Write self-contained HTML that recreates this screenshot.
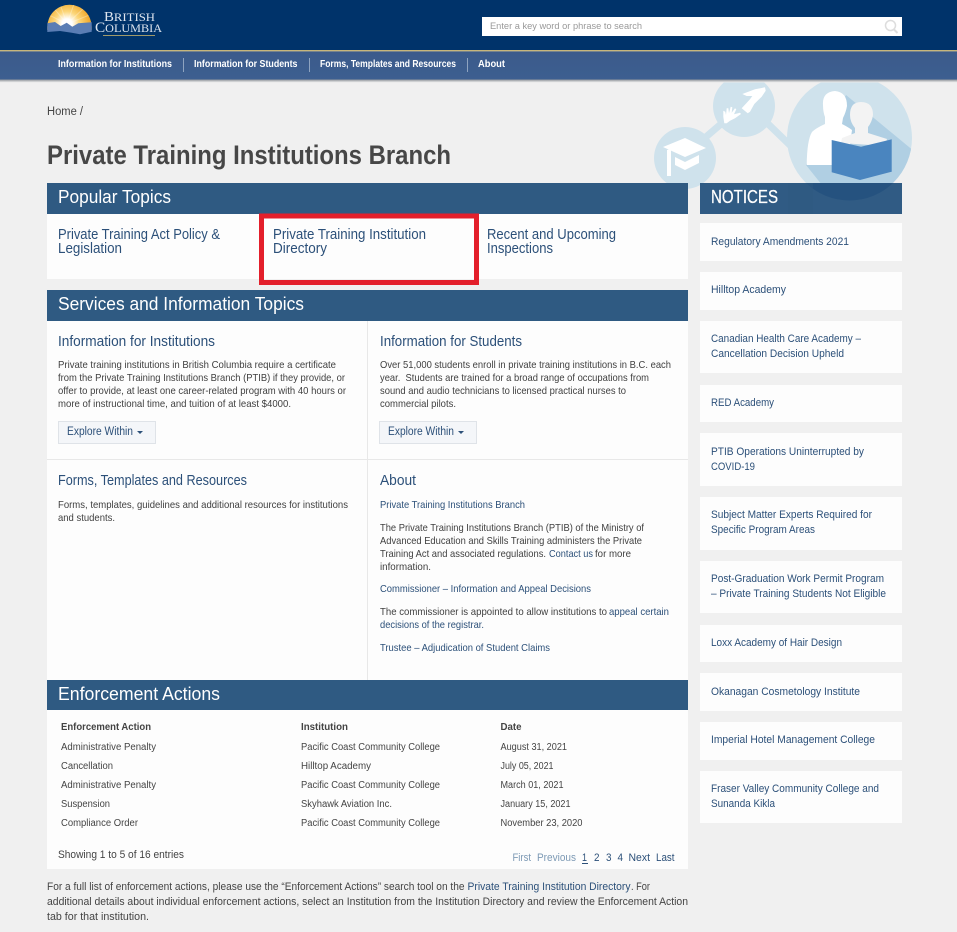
<!DOCTYPE html>
<html lang="en"><head><meta charset="utf-8"><title>Private Training Institutions Branch</title>
<style>
html,body{margin:0;padding:0;background:#f0f0f0;width:957px;height:932px;overflow:hidden}
svg{display:block}
text{font-family:"Liberation Sans",sans-serif;white-space:pre}
.l{fill:#2c5079}.b{fill:#3f3f3f}
.h{fill:#fff;font-size:18px}
.t{font-size:15px;fill:#2c5079}
.s{font-size:14.5px;fill:#2c5079}
.p{font-size:10.5px}
.n{font-size:11px;fill:#2c5079}
.m{font-size:10.5px;fill:#fff;font-weight:bold}
.r{font-size:10px;fill:#444}
</style></head><body>
<svg width="957" height="932" viewBox="0 0 957 932" xmlns="http://www.w3.org/2000/svg">
<defs>
<linearGradient id="nav" x1="0" y1="0" x2="0" y2="1"><stop offset="0" stop-color="#3b5a8b"/><stop offset="1" stop-color="#3d5f90"/></linearGradient>
<linearGradient id="sh" x1="0" y1="0" x2="0" y2="1"><stop offset="0" stop-color="#8a8f96"/><stop offset="1" stop-color="#f0f0f0"/></linearGradient>
<radialGradient id="sun" gradientUnits="userSpaceOnUse" cx="67" cy="24" r="23"><stop offset=".22" stop-color="#fff"/><stop offset=".55" stop-color="#fcd678"/><stop offset="1" stop-color="#f0a92e"/></radialGradient>
<clipPath id="big"><circle cx="849.5" cy="138" r="62.5"/></clipPath>
<clipPath id="gfx"><rect x="640" y="82" width="290" height="130"/></clipPath>
<clipPath id="dome"><path d="M47.3 30V27a22.2 22.2 0 0 1 44.4 0V30Z"/></clipPath>
<clipPath id="nb"><rect x="700" y="183" width="202" height="31"/></clipPath>
</defs>

<rect width="957" height="932" fill="#f0f0f0"/>

<!-- decorative graphic -->
<g clip-path="url(#gfx)">
<path d="M700 142L728 118M762 118L795 150" stroke="#cfe2ec" stroke-width="7" fill="none"/>
<circle cx="685" cy="158" r="31" fill="#cfe2ec"/>
<circle cx="744" cy="106" r="31" fill="#cfe2ec"/>
<circle cx="849.5" cy="138" r="62.5" fill="#cfe2ec"/>
<path clip-path="url(#big)" d="M846 95L915 152V210H842L806 165Z" fill="#b0cfe3"/>
<!-- cap -->
<path d="M663 147L685 138L706 148L685 157Z" fill="#fff"/>
<path d="M667 150L671 149V176H667Z" fill="#fff"/>
<path d="M675 157L685 162L699 155V163L685 170L675 165Z" fill="#fff"/>
<!-- hands -->
<path d="M742.300 94L755 89.300L765 87.300L765.700 90.700L761.700 96.700L758.300 100L754.300 104L750 111.700L747.700 113.300L741.700 108.300L750 99.300L752.300 96L746.700 96Z" fill="#fff"/>
<path d="M724.300 123.300L723.300 116.700L723.300 110.700L725.300 111.700L726 115L726.700 108.300L728.300 108.300L729 113.300L730.700 106.700L732.300 107.300L731.700 112.700L735 108.300L736.300 109.300L734 114.300L740 112.700L741 114L735 118.300L730 120.700L726.700 123.300Z" fill="#fff"/>
<!-- people -->
<path d="M823 105Q822 92 835 91Q847 92 847 106Q846 112 843 118L842 124Q848 127 852 130L850 145L832 165L806.700 165Q807 140 812 132Q816 128 825 124L825 117Q823 112 823 105Z" fill="#fff"/>
<path d="M850 115Q850 102 861 102Q873 102 873 115Q872 122 868 127L868 133L887 139L885 146L841 143L842 138L855 133L855 128Q850 122 850 115Z" fill="#f3f3f3"/>
<path d="M831.700 140L861 146.700L891.700 139.300V171.700L860 180L831.700 172.300Z" fill="#4a85bf"/>
</g>

<!-- header -->
<rect width="957" height="50" fill="#00336a"/>
<rect y="50" width="957" height="1.4" fill="#c7b67b"/>
<rect y="51.4" width="957" height="28.6" fill="url(#nav)"/>
<rect y="79.5" width="957" height="3" fill="url(#sh)"/>

<!-- logo -->
<g clip-path="url(#dome)">
<rect x="47" y="4" width="46" height="28" fill="url(#sun)"/>
<path d="M67 24L52 6M67 24L60 4M67 24L74 4M67 24L85 7M67 24L47 14M67 24L92 14" stroke="#fff" stroke-opacity=".3" stroke-width="1"/>
</g>
<path d="M47.300 23.300L55 22L60.700 26L66.700 22.700L72.300 26.700L78.300 23.300L91.700 22.300V31.700L80 34.300L71.700 32.700L60 31L47.300 32Z" fill="#5a7db4"/>
<text x="104" y="21" textLength="51" lengthAdjust="spacingAndGlyphs" style="font-family:'Liberation Serif',serif;font-size:12px" fill="#dfe6ef"><tspan font-size="14">B</tspan>RITISH</text>
<text x="95" y="32" textLength="67" lengthAdjust="spacingAndGlyphs" style="font-family:'Liberation Serif',serif;font-size:12px" fill="#dfe6ef"><tspan font-size="15">C</tspan>OLUMBIA</text>
<rect x="103" y="35" width="52" height="1" fill="#a09a6a"/>

<!-- search -->
<rect x="482" y="17" width="420" height="19" fill="#fff"/>
<text x="490" y="29" font-size="9.5" fill="#999" textLength="152" lengthAdjust="spacingAndGlyphs">Enter a key word or phrase to search</text>
<circle cx="890.5" cy="25.5" r="5" fill="none" stroke="#ddd" stroke-width="1.5"/>
<path d="M894 29.5L897.5 33" stroke="#ddd" stroke-width="2"/>

<!-- nav -->
<text class="m" x="58" y="67" textLength="114" lengthAdjust="spacingAndGlyphs">Information for Institutions</text>
<text class="m" x="194" y="67" textLength="103.500" lengthAdjust="spacingAndGlyphs">Information for Students</text>
<text class="m" x="320" y="67" textLength="136" lengthAdjust="spacingAndGlyphs">Forms, Templates and Resources</text>
<text class="m" x="478" y="67" textLength="27" lengthAdjust="spacingAndGlyphs">About</text>
<path d="M183.500 58V72M309.500 58V72M467.500 58V72" stroke="#8ea3c0" stroke-width="1"/>

<!-- breadcrumb and title -->
<text x="47" y="115" font-size="11.500" fill="#444" textLength="36" lengthAdjust="spacingAndGlyphs">Home /</text>
<text x="47" y="164" font-size="27" font-weight="bold" fill="#474747" textLength="404" lengthAdjust="spacingAndGlyphs">Private Training Institutions Branch</text>

<!-- panels -->
<rect x="47" y="214" width="641" height="65" fill="#fdfdfd"/>
<rect x="47" y="321" width="641" height="359" fill="#fdfdfd"/>
<rect x="47" y="710" width="641" height="159" fill="#fdfdfd"/>
<rect x="47" y="183" width="641" height="31" fill="#2f5a82"/>
<rect x="47" y="290" width="641" height="31" fill="#2f5a82"/>
<rect x="47" y="680" width="641" height="30" fill="#2f5a82"/>
<rect x="700" y="183" width="202" height="31" fill="#305b84"/>
<circle clip-path="url(#nb)" cx="849.500" cy="138" r="62.500" fill="#25527f"/>
<rect x="788" y="183" width="25" height="31" fill="#2f5a82" opacity=".55"/>
<path d="M367.500 321V680" stroke="#e8e8e8"/>
<path d="M47 459.500H688" stroke="#e8e8e8"/>

<!-- section headers -->
<text class="h" x="58" y="203" textLength="113" lengthAdjust="spacingAndGlyphs">Popular Topics</text>
<text class="h" x="711" y="203" textLength="67" lengthAdjust="spacingAndGlyphs" stroke="#fff" stroke-width=".25">NOTICES</text>
<text class="h" x="58" y="310" textLength="246" lengthAdjust="spacingAndGlyphs">Services and Information Topics</text>
<text class="h" x="58" y="700" textLength="162" lengthAdjust="spacingAndGlyphs">Enforcement Actions</text>

<!-- popular -->
<text class="t" x="58" y="239" textLength="162" lengthAdjust="spacingAndGlyphs">Private Training Act Policy &amp;</text>
<text class="t" x="58" y="253" textLength="64" lengthAdjust="spacingAndGlyphs">Legislation</text>
<text class="t" x="273" y="239" textLength="153" lengthAdjust="spacingAndGlyphs">Private Training Institution</text>
<text class="t" x="273" y="253" textLength="54" lengthAdjust="spacingAndGlyphs">Directory</text>
<text class="t" x="487" y="239" textLength="129" lengthAdjust="spacingAndGlyphs">Recent and Upcoming</text>
<text class="t" x="487" y="253" textLength="66" lengthAdjust="spacingAndGlyphs">Inspections</text>
<rect x="261.500" y="216" width="215" height="66.500" fill="none" stroke="#e31f2b" stroke-width="5"/>

<!-- services -->
<text class="s" x="58" y="346" textLength="157" lengthAdjust="spacingAndGlyphs">Information for Institutions</text>
<text class="p b" x="58" y="368" textLength="278" lengthAdjust="spacingAndGlyphs">Private training institutions in British Columbia require a certificate</text>
<text class="p b" x="58" y="381" textLength="287" lengthAdjust="spacingAndGlyphs">from the Private Training Institutions Branch (PTIB) if they provide, or</text>
<text class="p b" x="58" y="394" textLength="288" lengthAdjust="spacingAndGlyphs">offer to provide, at least one career-related program with 40 hours or</text>
<text class="p b" x="58" y="407" textLength="233" lengthAdjust="spacingAndGlyphs">more of instructional time, and tuition of at least $4000.</text>
<rect x="58.500" y="421.500" width="97" height="22" fill="#f4f6f9" stroke="#dfe3e8"/>
<text x="67" y="435" font-size="11.500" fill="#2c5079" textLength="66" lengthAdjust="spacingAndGlyphs">Explore Within</text>
<path d="M137 431H143L140 434Z" fill="#2c5079"/>

<text class="s" x="380" y="346" textLength="142" lengthAdjust="spacingAndGlyphs">Information for Students</text>
<text class="p b" x="380" y="368" textLength="291" lengthAdjust="spacingAndGlyphs">Over 51,000 students enroll in private training institutions in B.C. each</text>
<text class="p b" x="380" y="381" textLength="269" lengthAdjust="spacingAndGlyphs">year.  Students are trained for a broad range of occupations from</text>
<text class="p b" x="380" y="394" textLength="246" lengthAdjust="spacingAndGlyphs">sound and audio technicians to licensed practical nurses to</text>
<text class="p b" x="380" y="407" textLength="76" lengthAdjust="spacingAndGlyphs">commercial pilots.</text>
<rect x="379.500" y="421.500" width="97" height="22" fill="#f4f6f9" stroke="#dfe3e8"/>
<text x="388" y="435" font-size="11.500" fill="#2c5079" textLength="66" lengthAdjust="spacingAndGlyphs">Explore Within</text>
<path d="M458 431H464L461 434Z" fill="#2c5079"/>

<text class="s" x="58" y="485" textLength="189" lengthAdjust="spacingAndGlyphs">Forms, Templates and Resources</text>
<text class="p b" x="58" y="508" textLength="290" lengthAdjust="spacingAndGlyphs">Forms, templates, guidelines and additional resources for institutions</text>
<text class="p b" x="58" y="521" textLength="57" lengthAdjust="spacingAndGlyphs">and students.</text>

<text class="s" x="380" y="485" textLength="36" lengthAdjust="spacingAndGlyphs">About</text>
<text class="p l" x="380" y="508" textLength="145" lengthAdjust="spacingAndGlyphs">Private Training Institutions Branch</text>
<text class="p b" x="380" y="531" textLength="264" lengthAdjust="spacingAndGlyphs">The Private Training Institutions Branch (PTIB) of the Ministry of</text>
<text class="p b" x="380" y="544" textLength="262" lengthAdjust="spacingAndGlyphs">Advanced Education and Skills Training administers the Private</text>
<text class="p b" x="380" y="557" textLength="166" lengthAdjust="spacingAndGlyphs">Training Act and associated regulations.</text>
<text class="p l" x="549" y="557" textLength="44" lengthAdjust="spacingAndGlyphs">Contact us</text>
<text class="p b" x="595" y="557" textLength="36" lengthAdjust="spacingAndGlyphs">for more</text>
<text class="p b" x="380" y="570" textLength="51" lengthAdjust="spacingAndGlyphs">information.</text>
<text class="p l" x="380" y="592" textLength="211" lengthAdjust="spacingAndGlyphs">Commissioner – Information and Appeal Decisions</text>
<text class="p b" x="380" y="615" textLength="227" lengthAdjust="spacingAndGlyphs">The commissioner is appointed to allow institutions to</text>
<text class="p l" x="609" y="615" textLength="60" lengthAdjust="spacingAndGlyphs">appeal certain</text>
<text class="p l" x="380" y="628" textLength="104" lengthAdjust="spacingAndGlyphs">decisions of the registrar.</text>
<text class="p l" x="380" y="651" textLength="170" lengthAdjust="spacingAndGlyphs">Trustee – Adjudication of Student Claims</text>

<!-- table -->
<g class="r">
<text class="r" x="61" y="730" font-weight="bold" textLength="90" lengthAdjust="spacingAndGlyphs">Enforcement Action</text>
<text class="r" x="301" y="730" font-weight="bold" textLength="47" lengthAdjust="spacingAndGlyphs">Institution</text>
<text class="r" x="500.500" y="730" font-weight="bold" textLength="21" lengthAdjust="spacingAndGlyphs">Date</text>
<text class="r" x="61" y="750" textLength="95" lengthAdjust="spacingAndGlyphs">Administrative Penalty</text>
<text class="r" x="301" y="750" textLength="139" lengthAdjust="spacingAndGlyphs">Pacific Coast Community College</text>
<text class="r" x="500.500" y="750" textLength="66.500" lengthAdjust="spacingAndGlyphs">August 31, 2021</text>
<text class="r" x="61" y="769" textLength="52" lengthAdjust="spacingAndGlyphs">Cancellation</text>
<text class="r" x="301" y="769" textLength="70" lengthAdjust="spacingAndGlyphs">Hilltop Academy</text>
<text class="r" x="500.500" y="769" textLength="53" lengthAdjust="spacingAndGlyphs">July 05, 2021</text>
<text class="r" x="61" y="788" textLength="95" lengthAdjust="spacingAndGlyphs">Administrative Penalty</text>
<text class="r" x="301" y="788" textLength="139" lengthAdjust="spacingAndGlyphs">Pacific Coast Community College</text>
<text class="r" x="500.500" y="788" textLength="63" lengthAdjust="spacingAndGlyphs">March 01, 2021</text>
<text class="r" x="61" y="807" textLength="49" lengthAdjust="spacingAndGlyphs">Suspension</text>
<text class="r" x="301" y="807" textLength="91" lengthAdjust="spacingAndGlyphs">Skyhawk Aviation Inc.</text>
<text class="r" x="500.500" y="807" textLength="70" lengthAdjust="spacingAndGlyphs">January 15, 2021</text>
<text class="r" x="61" y="826" textLength="77" lengthAdjust="spacingAndGlyphs">Compliance Order</text>
<text class="r" x="301" y="826" textLength="139" lengthAdjust="spacingAndGlyphs">Pacific Coast Community College</text>
<text class="r" x="500.500" y="826" textLength="82" lengthAdjust="spacingAndGlyphs">November 23, 2020</text>
</g>
<text x="58" y="858" font-size="11" fill="#444" textLength="126" lengthAdjust="spacingAndGlyphs">Showing 1 to 5 of 16 entries</text>
<g font-size="11">
<text x="512.500" y="861" fill="#7d9ab5" textLength="18.500" lengthAdjust="spacingAndGlyphs">First</text>
<text x="537" y="861" fill="#7d9ab5" textLength="39" lengthAdjust="spacingAndGlyphs">Previous</text>
<text x="582" y="861" fill="#2c5079" textLength="5" lengthAdjust="spacingAndGlyphs">1</text>
<rect x="582" y="863" width="6" height="1" fill="#2c5079"/>
<text x="594" y="861" fill="#2c5079" textLength="5.500" lengthAdjust="spacingAndGlyphs">2</text>
<text x="606" y="861" fill="#2c5079" textLength="5.500" lengthAdjust="spacingAndGlyphs">3</text>
<text x="617.500" y="861" fill="#2c5079" textLength="5.500" lengthAdjust="spacingAndGlyphs">4</text>
<text x="628.500" y="861" fill="#2c5079" textLength="21.500" lengthAdjust="spacingAndGlyphs">Next</text>
<text x="656" y="861" fill="#2c5079" textLength="18.500" lengthAdjust="spacingAndGlyphs">Last</text>
</g>

<!-- footer text -->
<g font-size="11">
<text x="47" y="890" fill="#444" textLength="417.500" lengthAdjust="spacingAndGlyphs">For a full list of enforcement actions, please use the “Enforcement Actions” search tool on the</text>
<text x="467.500" y="890" fill="#2c5079" textLength="163" lengthAdjust="spacingAndGlyphs">Private Training Institution Directory</text>
<text x="631" y="890" fill="#444" textLength="19" lengthAdjust="spacingAndGlyphs">. For</text>
<text x="47" y="905" fill="#444" textLength="641" lengthAdjust="spacingAndGlyphs">additional details about individual enforcement actions, select an Institution from the Institution Directory and review the Enforcement Action</text>
<text x="47" y="920" fill="#444" textLength="102" lengthAdjust="spacingAndGlyphs">tab for that institution.</text>
</g>

<!-- notices -->
<g fill="#fdfdfd">
<rect x="700" y="223" width="202" height="38"/>
<rect x="700" y="272" width="202" height="38"/>
<rect x="700" y="321" width="202" height="52"/>
<rect x="700" y="385" width="202" height="37"/>
<rect x="700" y="433" width="202" height="53"/>
<rect x="700" y="497" width="202" height="53"/>
<rect x="700" y="561" width="202" height="52"/>
<rect x="700" y="625" width="202" height="37"/>
<rect x="700" y="673" width="202" height="38"/>
<rect x="700" y="722" width="202" height="38"/>
<rect x="700" y="771" width="202" height="52"/>
</g>
<text class="n" x="711" y="245" textLength="138" lengthAdjust="spacingAndGlyphs">Regulatory Amendments 2021</text>
<text class="n" x="711" y="293" textLength="75" lengthAdjust="spacingAndGlyphs">Hilltop Academy</text>
<text class="n" x="711" y="342" textLength="150" lengthAdjust="spacingAndGlyphs">Canadian Health Care Academy –</text>
<text class="n" x="711" y="357" textLength="133" lengthAdjust="spacingAndGlyphs">Cancellation Decision Upheld</text>
<text class="n" x="711" y="406" textLength="63" lengthAdjust="spacingAndGlyphs">RED Academy</text>
<text class="n" x="711" y="455" textLength="153" lengthAdjust="spacingAndGlyphs">PTIB Operations Uninterrupted by</text>
<text class="n" x="711" y="470" textLength="44" lengthAdjust="spacingAndGlyphs">COVID-19</text>
<text class="n" x="711" y="518" textLength="161" lengthAdjust="spacingAndGlyphs">Subject Matter Experts Required for</text>
<text class="n" x="711" y="533" textLength="104" lengthAdjust="spacingAndGlyphs">Specific Program Areas</text>
<text class="n" x="711" y="582" textLength="173" lengthAdjust="spacingAndGlyphs">Post-Graduation Work Permit Program</text>
<text class="n" x="711" y="597" textLength="175" lengthAdjust="spacingAndGlyphs">– Private Training Students Not Eligible</text>
<text class="n" x="711" y="646" textLength="131" lengthAdjust="spacingAndGlyphs">Loxx Academy of Hair Design</text>
<text class="n" x="711" y="695" textLength="149" lengthAdjust="spacingAndGlyphs">Okanagan Cosmetology Institute</text>
<text class="n" x="711" y="743" textLength="164" lengthAdjust="spacingAndGlyphs">Imperial Hotel Management College</text>
<text class="n" x="711" y="792" textLength="168" lengthAdjust="spacingAndGlyphs">Fraser Valley Community College and</text>
<text class="n" x="711" y="807" textLength="64" lengthAdjust="spacingAndGlyphs">Sunanda Kikla</text>
</svg>
</body></html>
